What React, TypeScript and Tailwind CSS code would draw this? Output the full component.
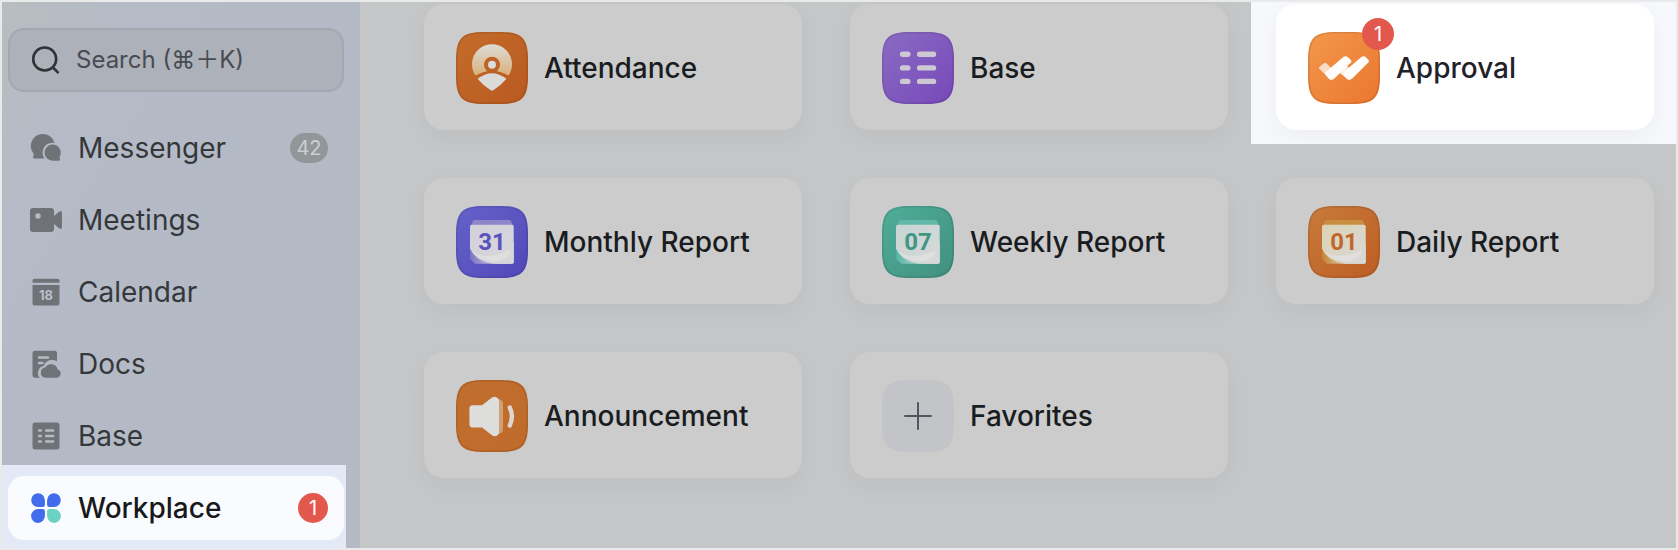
import type { ReactNode } from 'react';

/* ---------- sidebar icons ---------- */

const MessengerIcon = () => (
    <svg viewBox="0 0 32 32" className="size-8 shrink-0" fill="currentColor" aria-hidden="true">
        <path d="M13 2a12 12 0 0 1 11.6 8.9A9.9 9.9 0 0 0 12.6 20.5c0 2.2.6 4.2 1.8 5.9H4.2c-1 0-1.4-.8-.9-1.6l.5-2.9A12 12 0 0 1 13 2Z" />
        <path d="M22.6 12.6a8 8 0 0 1 7 12l.4 3c.1.7-.4 1.2-1.1 1.1H22.6a8 8 0 0 1 0-16.1Z" />
    </svg>
);

const MeetingsIcon = () => (
    <svg viewBox="0 0 32 32" className="size-8 shrink-0" fill="currentColor" aria-hidden="true">
        <path
            fillRule="evenodd"
            d="M3 4h18a3 3 0 0 1 3 3v18a3 3 0 0 1-3 3H3a3 3 0 0 1-3-3V7a3 3 0 0 1 3-3Zm5 5.300a2.700 2.700 0 1 0 0 5.400 2.700 2.700 0 0 0 0-5.400Z"
        />
        <path d="M24 12 29.400 7.600C30.400 6.800 32 7.200 32 8.600v14.800c0 1.400-1.600 1.800-2.600 1L24 20Z" />
    </svg>
);

const CalendarIcon = () => (
    <svg viewBox="0 0 32 32" className="size-8 shrink-0" fill="currentColor" aria-hidden="true">
        <path d="M4.500 2.700h23a2 2 0 0 1 2 2v2H2.500v-2a2 2 0 0 1 2-2Z" />
        <path d="M2.500 9h27v18.500a2 2 0 0 1-2 2h-23a2 2 0 0 1-2-2Z" />
        <text x="16" y="23.500" textAnchor="middle" className="fill-[#b9bfca] text-[13px] font-bold">
            18
        </text>
    </svg>
);

const DocsIcon = () => (
    <svg viewBox="0 0 32 32" className="size-8 shrink-0" fill="currentColor" aria-hidden="true">
        <path d="M5 2.700h19.500a2.500 2.500 0 0 1 2.500 2.500v8a9 9 0 0 0-13.300 4.800 7 7 0 0 0-3.900 11.700H5a2.500 2.500 0 0 1-2.500-2.500v-22A2.500 2.500 0 0 1 5 2.700Z" />
        <path d="M9 9.500h9M9 15h3.500" className="stroke-[#b5bbc6]" strokeWidth="2.400" strokeLinecap="round" />
        <path d="M15.500 29.800a5.200 5.200 0 0 1-.3-10.300 6.800 6.800 0 0 1 12.400 1.700 4.500 4.500 0 0 1-.3 8.600Z" />
    </svg>
);

const BaseIcon = () => (
    <svg viewBox="0 0 32 32" className="size-8 shrink-0" fill="currentColor" aria-hidden="true">
        <rect x="2.500" y="2.500" width="27" height="27" rx="2.500" />
        <path
            d="M9.200 10.500h1.600M16.200 10.500h7M9.200 16h1.600M16.200 16h7M9.200 21.500h1.600M16.200 21.500h7"
            className="stroke-[#b5bbc6]"
            strokeWidth="2.400"
            strokeLinecap="round"
        />
    </svg>
);

const WorkplaceIcon = () => (
    <svg viewBox="0 0 32 32" className="size-8 shrink-0" aria-hidden="true">
        <g fill="#416ceb">
            <path d="M8 1.300a6.900 6.900 0 0 1 6.900 6.900v4.500a2.200 2.200 0 0 1-2.200 2.200H8a6.800 6.800 0 0 1 0-13.600Z" />
            <path d="M24 1.300a6.800 6.800 0 0 1 0 13.600h-4.700a2.200 2.200 0 0 1-2.200-2.200V8.200A6.900 6.900 0 0 1 24 1.300Z" />
            <path d="M8 17.100h4.700a2.200 2.200 0 0 1 2.200 2.200v4.500A6.900 6.900 0 1 1 8 17.100Z" />
        </g>
        <path fill="#6bd2c1" d="M19.300 17.100H24a6.900 6.900 0 1 1-6.900 6.700v-4.500a2.200 2.200 0 0 1 2.200-2.200Z" />
    </svg>
);

/* ---------- app icons ---------- */

type TileProps = {
    id: string;
    from: string;
    to: string;
    edge?: string;
    children: ReactNode;
};

const Tile = ({ id, from, to, edge = '#00000018', children }: TileProps) => (
    <svg viewBox="0 0 72 72" className="size-[72px] shrink-0" aria-hidden="true">
        <defs>
            <linearGradient id={id} x1="0" y1="0" x2="1" y2="1">
                <stop offset="0" stopColor={from} />
                <stop offset="1" stopColor={to} />
            </linearGradient>
        </defs>
        <path
            d="M28 0H44C66 0 72 6 72 28V44C72 66 66 72 44 72H28C6 72 0 66 0 44V28C0 6 6 0 28 0Z"
            fill={`url(#${id})`}
        />
        <path
            d="M28 .8H44C65.200 .8 71.200 6.800 71.200 28V44C71.200 65.200 65.200 71.200 44 71.200H28C6.800 71.200 .8 65.200 .8 44V28C.8 6.800 6.800 .8 28 .8Z"
            fill="none"
            stroke={edge}
            strokeWidth="1.600"
        />
        {children}
    </svg>
);

const AttendanceTile = () => (
    <Tile id="attendance" from="#c46c2a" to="#b95920">
        <defs>
            <linearGradient id="attendance-pin" x1="0" y1="0" x2="0" y2="1">
                <stop offset="0" stopColor="#dddbd6" />
                <stop offset="1" stopColor="#d8b27a" />
            </linearGradient>
        </defs>
        <path d="M19.500 43.500A20 20 0 1 1 52.500 43.500Q36 34 19.500 43.500Z" fill="url(#attendance-pin)" />
        <circle cx="36" cy="32.700" r="8" fill="#be6226" />
        <circle cx="36" cy="32.700" r="4" fill="#dcdcdb" />
        <path d="M21.500 46.800Q36 35.500 50.500 46.800Q45 53.500 37.200 58.300Q36 59 34.800 58.300Q27 53.500 21.500 46.800Z" fill="#dadad9" />
    </Tile>
);

const BaseTile = () => (
    <Tile id="base" from="#8a6cc4" to="#7748b8">
        <path
            d="M20.600 22.300H25.800M37.600 22.300H51.500M20.600 35.900H25.800M37.600 35.900H51.500M20.600 49.400H25.800M37.600 49.400H51.500"
            stroke="#cdc8d2"
            strokeWidth="5.400"
            strokeLinecap="round"
        />
    </Tile>
);

const ApprovalTile = () => (
    <Tile id="approval" from="#f2984c" to="#eb762f">
        <defs>
            <linearGradient id="approval-fade" x1="0" y1="0" x2="1" y2="0">
                <stop offset="0" stopColor="#fffdfb" />
                <stop offset="1" stopColor="#fbe0cb" />
            </linearGradient>
        </defs>
        <g strokeLinejoin="round" strokeWidth="3">
            <path d="M12.500 36 17.300 32.300 28 42.500 23.200 46.200Z" fill="#f9dcc6" stroke="#f9dcc6" />
            <path d="M31 38.500 36.500 33.500 44 41 41 46.200Z" fill="url(#approval-fade)" stroke="#fdeadb" />
            <path d="M18.500 41.500 36 26.300Q37.600 25.200 39 26.400L42 29.300 25 45.600Q23.200 47.100 21.500 45.400Z" fill="#fffdfb" stroke="#fffdfb" />
            <path d="M36.500 41.500 54 26.300Q55.600 25.200 57 26.400L59.500 29.300 43 45.600Q41.200 47.100 39.500 45.400Z" fill="#fffdfb" stroke="#fffdfb" />
        </g>
    </Tile>
);

type ReportTileProps = {
    id: string;
    day: string;
    from: string;
    to: string;
    tab: string;
    page: string;
    curl: string;
    ink: string;
};

const ReportTile = ({ id, day, from, to, tab, page, curl, ink }: ReportTileProps) => (
    <Tile id={id} from={from} to={to}>
        <defs>
            <linearGradient id={`${id}-page`} x1="0" y1="0" x2="1" y2="1">
                <stop offset="0" stopColor={page} />
                <stop offset="1" stopColor="#d8d8da" />
            </linearGradient>
            <linearGradient id={`${id}-curl`} x1="0" y1="0" x2="1" y2="0">
                <stop offset="0" stopColor={curl} />
                <stop offset=".7" stopColor="#dcdcdc" />
            </linearGradient>
        </defs>
        <path d="M18.500 14H53.500Q54.800 14 55.300 15.500L56.500 19H15.500L16.700 15.500Q17.200 14 18.500 14Z" fill={tab} />
        <path d="M14 36H57.700V56Q57.700 57.700 56 57.700H19L14 53Z" fill={`url(#${id}-curl)`} />
        <path d="M15.700 18.700H56Q57.700 18.700 57.700 20.400V56Q57.700 57.700 56 57.700H37Q20 55.500 14 42.500V20.400Q14 18.700 15.700 18.700Z" fill={`url(#${id}-page)`} />
        <path d="M16 46Q31 55 54 44Q54 49.500 50 51.500Q43 56 37 55.500Q23 54 16 46Z" fill="#e2e2e2" opacity=".7" />
        <text x="36" y="43.500" textAnchor="middle" fill={ink} className="font-['Roboto',sans-serif] text-[24px] font-bold">
            {day}
        </text>
    </Tile>
);

const AnnouncementTile = () => (
    <Tile id="announcement" from="#c06e2e" to="#bf6b2b">
        <path d="M41 18.500 45 20Q47 21 47 23V50Q47 52 45 53L41 54.500Z" fill="#cfa170" />
        <path
            d="M16.500 25.200H26L36 17.600Q40 15 43 19.500V53.500Q40 58 36 55.300L26 47.400H16.500Q13.400 47.400 13.400 44.300V28.300Q13.400 25.200 16.500 25.200Z"
            fill="#dddddc"
        />
        <path d="M53.800 27.500Q58 36.500 53.800 45.600" fill="none" stroke="#ddd8d0" strokeWidth="4.400" strokeLinecap="round" />
    </Tile>
);

const FavoritesTile = () => (
    <Tile id="favorites" from="#c3c4c7" to="#c3c4c7" edge="none">
        <path d="M36 23V49M23 36H49" stroke="#53565d" strokeWidth="2" strokeLinecap="round" />
    </Tile>
);

/* ---------- data ---------- */

const navItems = [
    { label: 'Messenger', icon: MessengerIcon, count: 42 },
    { label: 'Meetings', icon: MeetingsIcon },
    { label: 'Calendar', icon: CalendarIcon },
    { label: 'Docs', icon: DocsIcon },
    { label: 'Base', icon: BaseIcon },
];

const apps = [
    { label: 'Attendance', icon: <AttendanceTile /> },
    { label: 'Base', icon: <BaseTile /> },
    { label: 'Approval', icon: <ApprovalTile />, count: 1, spotlight: true },
    {
        label: 'Monthly Report',
        icon: <ReportTile id="monthly" day="31" from="#6662c9" to="#5148b9" tab="#8d86c9" page="#d2d0da" curl="#7a72c6" ink="#5a52bd" />,
    },
    {
        label: 'Weekly Report',
        icon: <ReportTile id="weekly" day="07" from="#4fae98" to="#418f7f" tab="#63b9a9" page="#c6d6d3" curl="#4fb5a2" ink="#419784" />,
    },
    {
        label: 'Daily Report',
        icon: <ReportTile id="daily" day="01" from="#c67c3c" to="#be5c22" tab="#c98f3e" page="#dcd3b4" curl="#c78530" ink="#bf682b" />,
    },
    { label: 'Announcement', icon: <AnnouncementTile /> },
    { label: 'Favorites', icon: <FavoritesTile /> },
];

/* ---------- layout ---------- */

const Sidebar = () => (
    <aside className="w-[358px] shrink-0 bg-linear-to-br from-[#b8bdc0] via-[#b4bbc6] via-20% to-[#b5b9c4] pt-[26px]">
        <label className="mr-4 ml-1.5 flex h-16 items-center gap-[14px] rounded-2xl border-2 border-[#a3a7b0] bg-[#adb1ba] pr-4 pl-5">
            <svg viewBox="0 0 32 32" className="size-8 shrink-0" fill="none" stroke="#303336" strokeWidth="2.600" strokeLinecap="round" aria-hidden="true">
                <circle cx="14.700" cy="15" r="11.500" />
                <path d="m23 23.500 4.800 4.800" />
            </svg>
            <input
                type="search"
                aria-label="Search"
                placeholder="Search (⌘＋K)"
                className="w-full min-w-0 bg-transparent text-2xl text-[#484b50] outline-none placeholder:text-[#484b50]"
            />
        </label>

        <nav className="mt-5">
            {navItems.map((item) => (
                <a key={item.label} href="#" className="mr-4 ml-1.5 flex h-[72px] items-center gap-4 pr-4 pl-[22px] text-[#6f7378]">
                    <item.icon />
                    <span className="flex-1 text-[28px] text-[#35383b]">{item.label}</span>
                    {item.count && (
                        <span className="flex h-[30px] w-[38px] items-center justify-center rounded-full bg-[#929699] text-xl text-[#cacfd5]">
                            {item.count}
                        </span>
                    )}
                </a>
            ))}

            {/* Active item, lifted out of the dimmed page */}
            <div className="relative -mt-[7px] mr-3.5 bg-[#e3e9f6] pt-[11px] pr-0.5 pb-2 pl-1.5">
                <a href="#" aria-current="page" className="flex h-16 items-center gap-4 rounded-2xl bg-[#fafbfe] pr-4 pl-[22px]">
                    <WorkplaceIcon />
                    <span className="flex-1 text-[28px] font-medium text-[#17191c]">Workplace</span>
                    <span className="flex size-[30px] items-center justify-center rounded-full bg-[#e3584d] text-xl text-white">1</span>
                </a>
            </div>
        </nav>
    </aside>
);

type AppCardProps = {
    label: string;
    icon: ReactNode;
    count?: number;
    spotlight?: boolean;
};

const AppCard = ({ label, icon, count, spotlight }: AppCardProps) => {
    const card = (
        <a
            href="#"
            className={`flex h-[126px] items-center gap-4 rounded-[20px] px-8 pt-0.5 shadow-[0_8px_24px_rgba(31,35,41,0.04)] ${
                spotlight ? 'bg-white text-[#1f2329]' : 'bg-[#cccccc] text-[#191c21]'
            }`}
        >
            <span className="relative">
                {icon}
                {count && (
                    <span className="absolute -top-3.5 -right-3.5 flex size-8 items-center justify-center rounded-full bg-[#e3584d] text-xl text-white">
                        {count}
                    </span>
                )}
            </span>
            <span className="text-[28px] font-medium">{label}</span>
        </a>
    );

    if (!spotlight) return card;

    return (
        <div className="relative -mt-0.5 -mr-[22px] -mb-3.5 -ml-[25px] overflow-hidden bg-[#f6f8fb] pt-0.5 pr-[22px] pb-3.5 pl-[25px]">
            {card}
        </div>
    );
};

const App = () => {
    return (
        <div className="flex min-h-screen border-2 border-[#e9ebeb] bg-[#c5c6c7] font-['Inter','Noto_Sans_CJK_SC',sans-serif]">
            <Sidebar />
            <main className="min-w-0 flex-1 pt-0.5 pr-[22px] pl-16">
                <div className="grid grid-cols-3 gap-12">
                    {apps.map((app) => (
                        <AppCard key={app.label} {...app} />
                    ))}
                </div>
            </main>
        </div>
    );
};

export default App;
